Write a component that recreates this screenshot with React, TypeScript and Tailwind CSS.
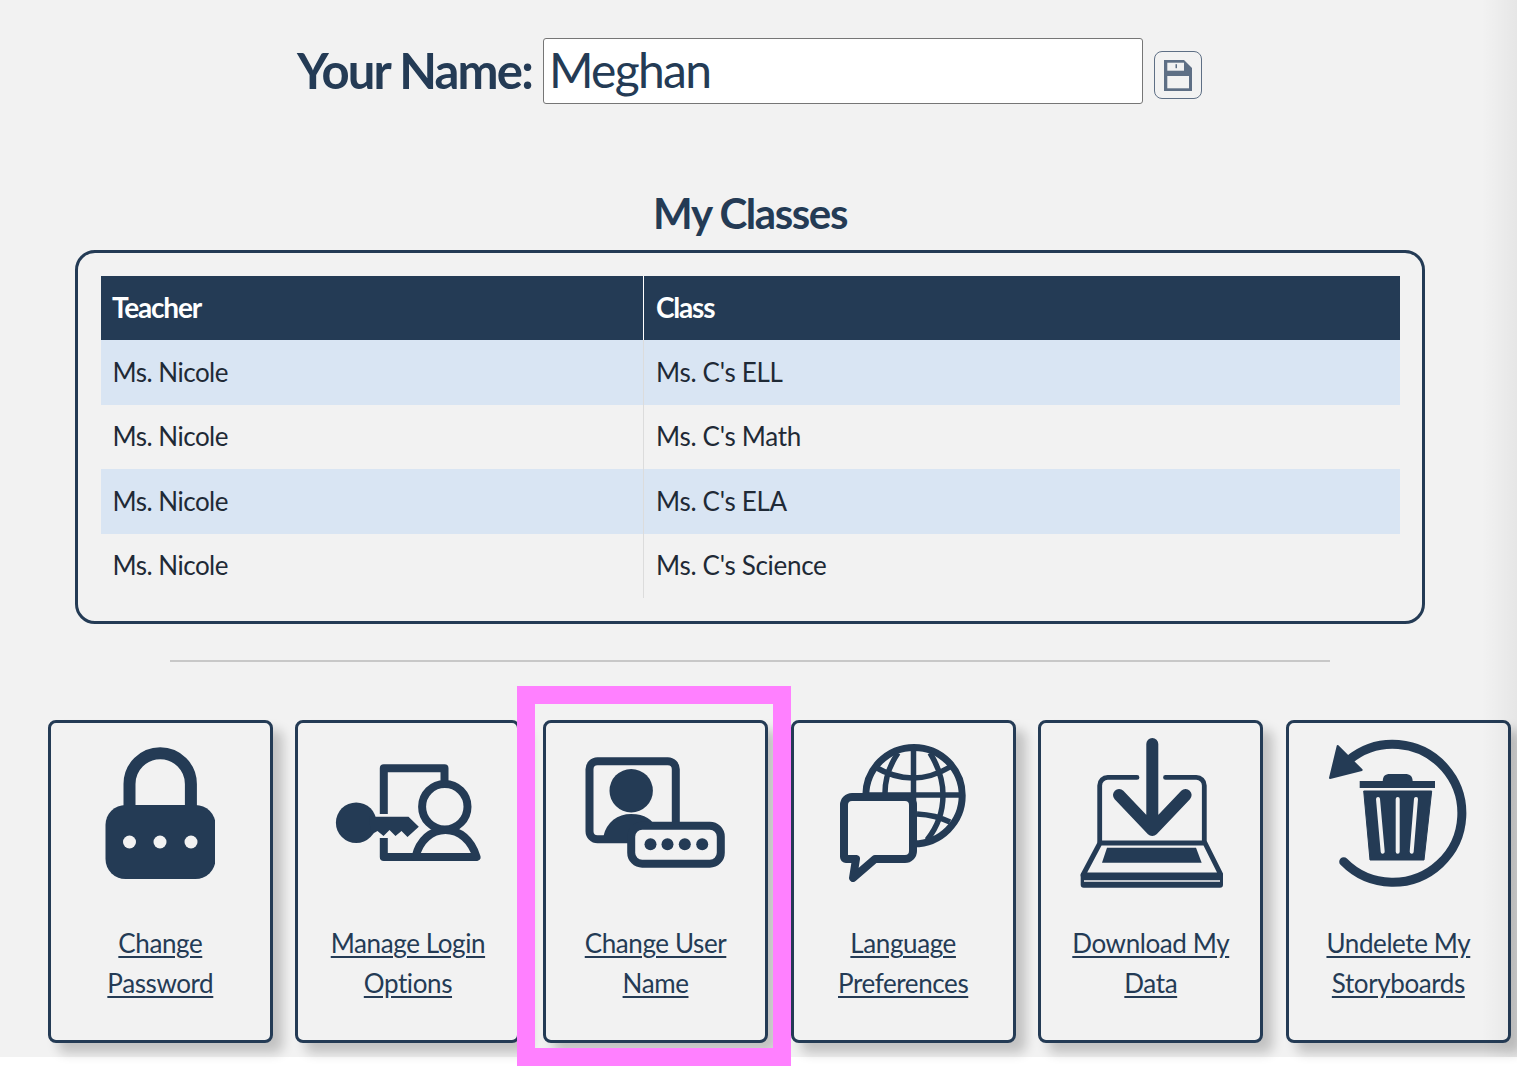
import type { ReactNode } from "react";

const NAVY = "#243b55";
const BG = "#f2f2f2";

const rows = [
  { teacher: "Ms. Nicole", name: "Ms. C's ELL" },
  { teacher: "Ms. Nicole", name: "Ms. C's Math" },
  { teacher: "Ms. Nicole", name: "Ms. C's ELA" },
  { teacher: "Ms. Nicole", name: "Ms. C's Science" },
];

// ── Icons ─────────────────────────────────────────────────────────────────────

function LockIcon() {
  return (
    <svg width="110" height="133" viewBox="-0.5 0 110 133">
      <path d="M24 66V37a30.7 30.7 0 0 1 61.4 0v29" fill="none" stroke={NAVY} strokeWidth="12" />
      <rect x="0" y="58" width="110" height="74" rx="20" fill={NAVY} />
      <circle cx="24" cy="95" r="6.5" fill={BG} />
      <circle cx="54.5" cy="95" r="6.5" fill={BG} />
      <circle cx="85.5" cy="95" r="6.5" fill={BG} />
    </svg>
  );
}

function LoginIcon() {
  return (
    <svg width="146" height="102" viewBox="-0.5 0 146 102">
      <path d="M48.3 52V6.3H109V20M48.3 76V95H80" fill="none" stroke={NAVY} strokeWidth="8" strokeLinejoin="round" />
      <path d="M80 95h62" stroke={NAVY} strokeWidth="8" />
      <circle cx="109.3" cy="44.7" r="22.7" fill={BG} stroke={NAVY} strokeWidth="8" />
      <path d="M80 95C84 78 96 68 110 68S136 78 141 95Z" fill={BG} stroke={NAVY} strokeWidth="8" strokeLinejoin="round" />
      <circle cx="20.7" cy="60.7" r="20.3" fill={NAVY} />
      <path d="M34 54.7H73L83.3 64.7 72 75 66 69 60 74 54 68 48 74 42 69 35 73Z" fill={NAVY} />
    </svg>
  );
}

function UserNameIcon() {
  return (
    <svg width="142" height="113" viewBox="0.5 0 142 113">
      <rect x="5" y="5.3" width="86.3" height="78" rx="8" fill={BG} stroke={NAVY} strokeWidth="8" />
      <circle cx="46.7" cy="34.7" r="21.7" fill={NAVY} />
      <path d="M19 80C22 66 33 58 46.7 58S68 64 72 72V80Z" fill={NAVY} />
      <rect x="46.7" y="69.7" width="89.6" height="38" rx="11" fill={BG} stroke={NAVY} strokeWidth="8" />
      <circle cx="66" cy="88.3" r="6" fill={NAVY} />
      <circle cx="83" cy="88.3" r="6" fill={NAVY} />
      <circle cx="100.3" cy="88.3" r="6" fill={NAVY} />
      <circle cx="117.7" cy="88.3" r="6" fill={NAVY} />
    </svg>
  );
}

function LanguageIcon() {
  return (
    <svg width="130" height="140" viewBox="0 0 130 140">
      <g fill="none" stroke={NAVY} strokeWidth="5.5">
        <circle cx="76" cy="53.6" r="48.2" strokeWidth="7" />
        <path d="M75.5 4v98M28 53h96" />
        <path d="M37 25Q75 47 112 25M60 11Q47 30 47 51M92 11Q105 32 105 53 105 78 89 98M79 72Q98 73 112 80" />
      </g>
      <path d="M14 55H67A8 8 0 0 1 75 63V109A8 8 0 0 1 67 117H37L15 136 18 117H8A2 2 0 0 1 6 115V63A8 8 0 0 1 14 55Z" fill={BG} stroke={NAVY} strokeWidth="8" strokeLinejoin="round" />
    </svg>
  );
}

function DownloadIcon() {
  return (
    <svg width="144" height="155" viewBox="-1 0 144 155">
      <path d="M57 42.4H27.7a8 8 0 0 0-8 8V107M85.5 42.4H116.3a8 8 0 0 1 8 8V107" fill="none" stroke={NAVY} strokeWidth="4.8" strokeLinecap="round" />
      <path d="M20 108H125L141 140H3Z" fill="none" stroke={NAVY} strokeWidth="5" strokeLinejoin="round" />
      <rect x="0.7" y="138" width="142.3" height="14.7" rx="3" fill={NAVY} />
      <path d="M4 146H140" stroke={BG} strokeWidth="1.6" />
      <path d="M27 112.7H116L121.7 127.7H22Z" fill={NAVY} />
      <path d="M72.3 9V95M39 60L72.3 95 105.6 60" fill="none" stroke={NAVY} strokeWidth="12" strokeLinecap="round" strokeLinejoin="round" />
    </svg>
  );
}

function UndeleteIcon() {
  return (
    <svg width="145" height="155" viewBox="0 0 145 155">
      <path d="M23 25A69 69 0 1 1 17.7 126.7" fill="none" stroke={NAVY} strokeWidth="9" strokeLinecap="round" />
      <path d="M11.7 11L4 43 35.7 35Z" fill={NAVY} stroke={NAVY} strokeWidth="2" strokeLinejoin="round" />
      <path d="M33.7 49.5H109" stroke={NAVY} strokeWidth="7" />
      <path d="M56.7 47C56.7 41 59 39 64 39H79C84 39 86.7 41 86.7 47Z" fill={NAVY} />
      <path d="M37.7 56H105.7L98 125H44Z" fill={NAVY} stroke={NAVY} strokeWidth="1" strokeLinejoin="round" />
      <path d="M52 64L56.7 116.7M71.7 64V116.7M90 64L85.7 116.7" stroke={BG} strokeWidth="4" strokeLinecap="round" />
    </svg>
  );
}

function SaveIcon() {
  return (
    <svg width="28" height="31" viewBox="0 0 28 31">
      <path d="M0 0H20L28 8V31H0Z" fill="#5e6f85" />
      <rect x="3.3" y="2.7" width="16.7" height="8" fill={BG} />
      <rect x="11.5" y="4.2" width="1.5" height="4" fill="#5e6f85" />
      <rect x="3.3" y="16" width="21.7" height="12.3" fill={BG} />
    </svg>
  );
}

// ── Account card ──────────────────────────────────────────────────────────────

function ActionCard({ icon, top, bottom, iconBox }: { icon: ReactNode; top: string; bottom: string; iconBox: string }) {
  return (
    <div className="flex h-[323px] w-[225px] shrink-0 flex-col items-center rounded-lg border-[3px] border-[#243b55] bg-[#f2f2f2] shadow-[10px_10px_12px_rgba(0,0,0,0.2)]">
      <div className={`flex h-[190px] w-full justify-center ${iconBox}`}>{icon}</div>
      <a href="#" className="mt-[10px] text-center font-['Lato',sans-serif] text-[26px] leading-[40px] tracking-[-0.4px] text-[#243b55] underline underline-offset-[3px]">
        {top}
        <br />
        {bottom}
      </a>
    </div>
  );
}

// ── Page ──────────────────────────────────────────────────────────────────────

export default function App() {
  return (
    <div className="relative h-[1067px] overflow-hidden bg-white font-['Lato',sans-serif]">
      <div className="h-[1057px] bg-[#f2f2f2] pl-[48px] pt-[38px]">
        {/* Your name */}
        <div className="flex items-start pl-[249px]">
          <label className="w-[246px] text-[49px] font-bold leading-[64px] tracking-[-1.8px] text-[#243b55]">Your Name:</label>
          <input
            readOnly
            value="Meghan"
            className="h-[66px] w-[600px] rounded-[3px] border border-[#767676] bg-white pb-[2px] pl-[5px] font-['Lato',sans-serif] text-[48px] tracking-[-1.7px] text-[#243b55]"
          />
          <button className="ml-[11px] mt-[13px] flex h-[48px] w-[48px] items-center justify-center rounded-lg border border-[#5e6f85] bg-[#f2f2f2]">
            <SaveIcon />
          </button>
        </div>

        {/* Classes */}
        <h2 className="ml-[-48px] mt-[79px] w-[1500px] text-center text-[42px] font-bold leading-[60px] tracking-[-1.4px] text-[#243b55]">My Classes</h2>
        <div className="ml-[27px] mt-[7px] h-[374px] w-[1350px] rounded-[20px] border-[3px] border-[#243b55] p-[23px]">
          <div className="grid grid-cols-[543px_756px]">
            <div className="flex h-[64px] items-center border-r border-white bg-[#243b55] pb-[2px] pl-[11px] text-[28px] font-bold tracking-[-1.2px] text-white">Teacher</div>
            <div className="flex h-[64px] items-center bg-[#243b55] pb-[2px] pl-[12px] text-[28px] font-bold tracking-[-1.2px] text-white">Class</div>
            {rows.map((row, i) => (
              <div key={row.name} className="contents">
                <div className={`flex h-[64.5px] items-center border-r border-[#dcdcdc] pl-[11.5px] text-[26px] tracking-[-0.5px] text-[#1f2a36] ${i % 2 === 0 ? "bg-[#d9e5f3]" : ""}`}>{row.teacher}</div>
                <div className={`flex h-[64.5px] items-center pl-[12px] text-[26px] tracking-[-0.3px] text-[#1f2a36] ${i % 2 === 0 ? "bg-[#d9e5f3]" : ""}`}>{row.name}</div>
              </div>
            ))}
          </div>
        </div>
        <div className="ml-[122px] mt-[36px] h-[2px] w-[1160px] bg-[#c8c8c8]" />

        {/* Actions */}
        <div className="ml-[-0.2px] mt-[58px] flex gap-[22.62px]">
          <ActionCard icon={<LockIcon />} iconBox="pt-[24px]" top="Change" bottom="Password" />
          <ActionCard icon={<LoginIcon />} iconBox="pt-[39px]" top="Manage Login" bottom="Options" />
          <ActionCard icon={<UserNameIcon />} iconBox="pt-[33px]" top="Change User" bottom="Name" />
          <ActionCard icon={<LanguageIcon />} iconBox="pt-[19px]" top="Language" bottom="Preferences" />
          <ActionCard icon={<DownloadIcon />} iconBox="pt-[12px]" top="Download My" bottom="Data" />
          <ActionCard icon={<UndeleteIcon />} iconBox="pt-[12px]" top="Undelete My" bottom="Storyboards" />
        </div>
      </div>

      {/* Faint shade along the right edge */}
      <div className="pointer-events-none absolute right-0 top-0 h-[1057px] w-[35px] bg-gradient-to-r from-transparent to-black/5" />

      {/* Highlight annotation */}
      <div className="absolute left-[517px] top-[686px] h-[380px] w-[274px] border-[18px] border-[#ff80ff]" />
    </div>
  );
}
